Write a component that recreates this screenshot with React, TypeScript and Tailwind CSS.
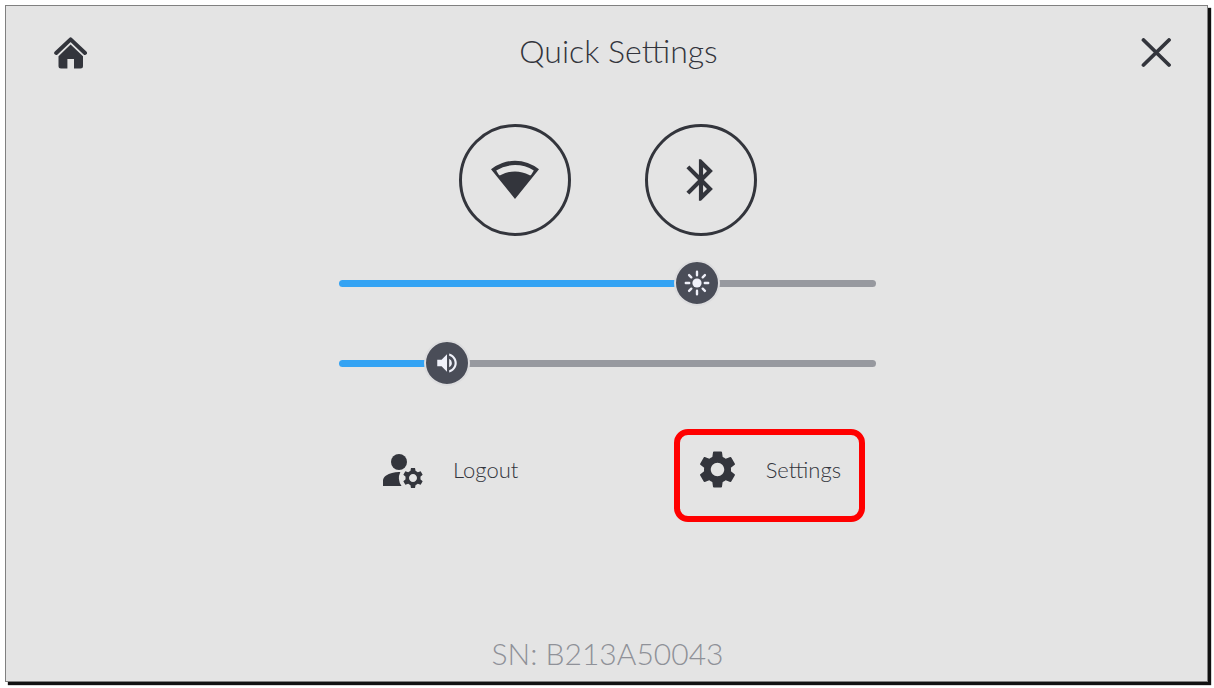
import { ReactNode, useState } from "react";
import {
    MdBluetooth,
    MdManageAccounts,
    MdSettings,
    MdVolumeUp,
} from "react-icons/md";

const MAX_LEVEL = 255;
const THUMB_SIZE = 46;

const HomeIcon = () => (
    <svg width="34" height="34" viewBox="0 0 34 34" fill="currentColor">
        <path
            d="M2.2 17 16.6 3.4 31 17"
            fill="none"
            stroke="currentColor"
            strokeWidth="4"
            strokeLinecap="round"
            strokeLinejoin="round"
        />
        <path d="M16.6 8.6 29 20.2V30a2.5 2.5 0 0 1-2.5 2.5H20V23h-6.6v9.5H7A2.5 2.5 0 0 1 4.5 30v-9.8Z" />
    </svg>
);

const CloseIcon = () => (
    <svg width="30" height="30" viewBox="0 0 30 30">
        <path
            d="M2.5 2 28 27M28 2 2.5 27"
            stroke="currentColor"
            strokeWidth="3.8"
            strokeLinecap="round"
        />
    </svg>
);

const WifiIcon = () => (
    <svg width="48" height="40" viewBox="0 0 48 40" fill="currentColor">
        <path
            fillRule="evenodd"
            d="M0 9.3A38 38 0 0 1 48 9.3L24 39ZM5.2 10.4 7.6 14.6Q8.4 15.9 9.8 15.1A29 29 0 0 1 38.2 15.1Q39.6 15.9 40.4 14.6L42.8 10.4A36 36 0 0 0 5.2 10.4Z"
        />
    </svg>
);

const SunIcon = () => (
    <svg width="26" height="26" viewBox="0 0 26 26" fill="currentColor">
        <circle cx="13" cy="13" r="4.6" />
        <path
            d="M13 1.8v3.4M13 20.8v3.4M1.8 13h3.4M20.8 13h3.4M5.1 5.1l2.2 2.2M18.7 18.7l2.2 2.2M5.1 20.9l2.2-2.2M18.7 7.3l2.2-2.2"
            stroke="currentColor"
            strokeWidth="2.4"
            strokeLinecap="round"
        />
    </svg>
);

const RoundButton = ({
    label,
    children,
}: {
    label: string;
    children: ReactNode;
}) => (
    <button
        type="button"
        aria-label={label}
        className="flex size-28 items-center justify-center rounded-full border-3 border-[#33353c]"
    >
        {children}
    </button>
);

const LevelSlider = ({
    label,
    initial,
    icon,
}: {
    label: string;
    initial: number;
    icon: ReactNode;
}) => {
    const [value, setValue] = useState(initial);
    const ratio = value / MAX_LEVEL;
    const center = `calc(${ratio * 100}% + ${(0.5 - ratio) * THUMB_SIZE}px)`;

    return (
        <div className="relative flex h-[46px] w-full items-center">
            <input
                type="range"
                aria-label={label}
                min={0}
                max={MAX_LEVEL}
                value={value}
                onChange={(e) => setValue(Number(e.target.value))}
                style={{
                    backgroundImage: `linear-gradient(to right, #34a3f3 ${center}, #97999f ${center})`,
                }}
                className="h-[7px] w-full cursor-pointer appearance-none rounded-full [&::-webkit-slider-thumb]:size-[46px] [&::-webkit-slider-thumb]:appearance-none [&::-webkit-slider-thumb]:rounded-full [&::-webkit-slider-thumb]:border-2 [&::-webkit-slider-thumb]:border-[#dcdcde] [&::-webkit-slider-thumb]:bg-[#4a4d58]"
            />
            <span
                style={{ left: center }}
                className="pointer-events-none absolute top-1/2 -translate-x-1/2 -translate-y-1/2 text-[#f0f1fa]"
            >
                {icon}
            </span>
        </div>
    );
};

const App = () => {
    return (
        <div className="flex min-h-screen flex-col bg-white p-[5px] pr-[6px] pb-[6px] font-['Lato',sans-serif] font-light text-[#33353c]">
            <main className="flex flex-1 flex-col items-center border border-[#808080] bg-[#e4e4e4] pb-2 pl-0.5 shadow-[3px_3px_1px_#111]">
                <header className="flex w-full items-center justify-between pt-6 pr-9 pl-[46px]">
                    <button type="button" aria-label="Home" className="w-[42px]">
                        <HomeIcon />
                    </button>
                    <h1 className="pb-1 text-[32px] leading-[42px]">
                        Quick Settings
                    </h1>
                    <button type="button" aria-label="Close">
                        <CloseIcon />
                    </button>
                </header>

                <div className="mt-12 flex gap-[74px]">
                    <RoundButton label="Wi-Fi">
                        <WifiIcon />
                    </RoundButton>
                    <RoundButton label="Bluetooth">
                        <MdBluetooth size={50} />
                    </RoundButton>
                </div>

                <div className="mt-6 flex w-full max-w-[537px] flex-col">
                    <div className="flex flex-col gap-[34px]">
                        <LevelSlider
                            label="Brightness"
                            initial={174}
                            icon={<SunIcon />}
                        />
                        <LevelSlider
                            label="Volume"
                            initial={44}
                            icon={<MdVolumeUp size={26} />}
                        />
                    </div>

                    <div className="mt-[43px] flex items-start justify-between pr-[11px] pl-10 text-[22px] leading-7">
                        <button
                            type="button"
                            className="mt-[17px] flex items-center gap-[26px]"
                        >
                            <MdManageAccounts size={48} />
                            Logout
                        </button>
                        <button
                            type="button"
                            className="flex items-center gap-[26px] rounded-[14px] border-6 border-[#ff0000] pt-3 pr-[18px] pb-6 pl-[15px]"
                        >
                            <MdSettings size={45} />
                            Settings
                        </button>
                    </div>
                </div>

                <p className="mt-auto text-[30px] leading-10 text-[#8f9198]">
                    SN: B213A50043
                </p>
            </main>
        </div>
    );
};

export default App;
